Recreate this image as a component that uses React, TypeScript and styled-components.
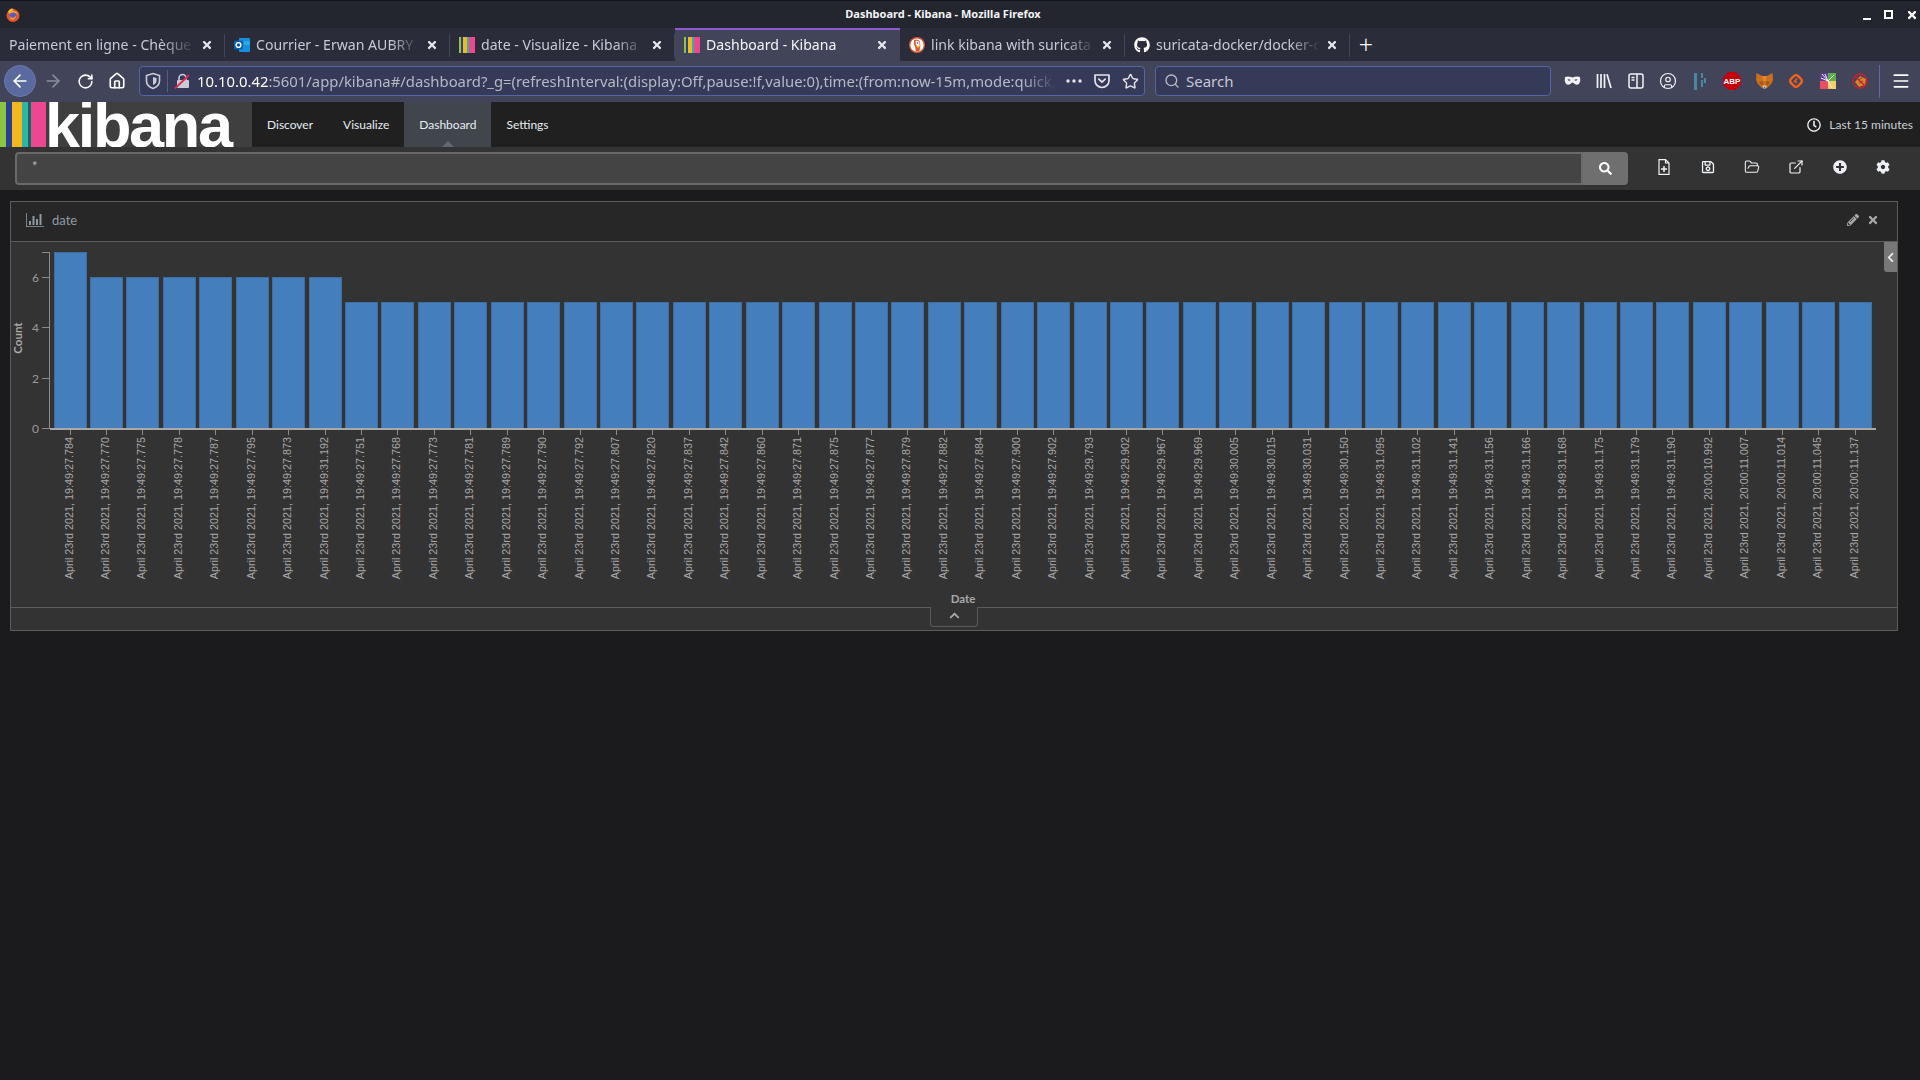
import React from 'react';
import styled, { createGlobalStyle } from 'styled-components';
import {
  ArrowLeft,
  ArrowRight,
  CircleUser,
  ExternalLink,
  FolderOpen,
  House,
  Menu,
  RotateCw,
  Search,
  Star,
} from 'lucide-react';
import {
  FaChevronLeft,
  FaChevronUp,
  FaCog,
  FaGithub,
  FaPencilAlt,
  FaPlusCircle,
  FaRegClock,
  FaRegSave,
  FaSearch,
  FaTimes,
} from 'react-icons/fa';

const GlobalStyle = createGlobalStyle`
  html, body {
    margin: 0;
    padding: 0;
    background: #1b1a1d;
    overflow: hidden;
  }
  #root {
    min-height: 100vh;
  }
`;

const stamps = [
  '19:49:27.784', '19:49:27.770', '19:49:27.775', '19:49:27.778', '19:49:27.787',
  '19:49:27.795', '19:49:27.873', '19:49:31.192', '19:49:27.751', '19:49:27.768',
  '19:49:27.773', '19:49:27.781', '19:49:27.789', '19:49:27.790', '19:49:27.792',
  '19:49:27.807', '19:49:27.820', '19:49:27.837', '19:49:27.842', '19:49:27.860',
  '19:49:27.871', '19:49:27.875', '19:49:27.877', '19:49:27.879', '19:49:27.882',
  '19:49:27.884', '19:49:27.900', '19:49:27.902', '19:49:29.793', '19:49:29.902',
  '19:49:29.967', '19:49:29.969', '19:49:30.005', '19:49:30.015', '19:49:30.031',
  '19:49:30.150', '19:49:31.095', '19:49:31.102', '19:49:31.141', '19:49:31.156',
  '19:49:31.166', '19:49:31.168', '19:49:31.175', '19:49:31.179', '19:49:31.190',
  '20:00:10.992', '20:00:11.007', '20:00:11.014', '20:00:11.045', '20:00:11.137',
];

const countFor = (i: number) => (i === 0 ? 7 : i < 8 ? 6 : 5);
const tickX = (i: number) => Math.floor(70 + 36.43 * i) + 0.5;
const Y0 = 428;
const UNIT = 25.14;

const FirefoxLogo = () => (
  <svg width="14" height="14" viewBox="0 0 14 14">
    <circle cx="7" cy="7.5" r="6.5" fill="#e8532b" />
    <path d="M2 4 Q4 -1 8 1 Q6 2 7 3 Q11 3 12 7 Q9 3 4 6z" fill="#ffb02e" />
    <circle cx="7" cy="8" r="3.6" fill="#4f5fc4" />
    <path d="M3.5 8 Q7 12 10.5 7 Q10 12 6 12 Q3.5 11 3.5 8z" fill="#f58b2b" />
  </svg>
);

const OutlookIcon = () => (
  <svg width="16" height="16" viewBox="0 0 16 16">
    <rect x="5" y="1" width="11" height="14" rx="1" fill="#1490df" />
    <rect x="10" y="4" width="6" height="4" fill="#28a8ea" />
    <rect x="0" y="3.5" width="9" height="9" rx="1" fill="#0f5fa8" />
    <circle cx="4.5" cy="8" r="2.4" fill="none" stroke="#fff" strokeWidth="1.4" />
  </svg>
);

const KibanaIcon = () => (
  <svg width="16" height="16" viewBox="0 0 16 16">
    <rect x="0" y="0" width="2" height="16" fill="#8cc63f" />
    <rect x="2" y="0" width="2" height="16" fill="#2a3f8f" />
    <rect x="4" y="0" width="4" height="16" fill="#f4b81c" />
    <rect x="8" y="0" width="2" height="16" fill="#2eb5a8" />
    <rect x="10" y="0" width="6" height="16" fill="#ec4790" />
  </svg>
);

const DuckIcon = () => (
  <svg width="16" height="16" viewBox="0 0 16 16">
    <circle cx="8" cy="8" r="8" fill="#de5833" />
    <circle cx="8" cy="8" r="6.6" fill="#fff" />
    <path d="M5 3 Q9 1.5 11 5 Q12 9 10.5 14 L7 14.5 Q6 9 5 7z" fill="#de5833" />
    <path d="M6.5 4 Q9.5 3 10.5 6 L10.5 9 L8 9.5 L7 7z" fill="#fff" />
    <circle cx="8.5" cy="6" r="0.8" fill="#2d4f8e" />
    <path d="M7.5 9 L11 8.5 L10.5 10.2 L8 10.4z" fill="#fdd20a" />
  </svg>
);

const ShieldIcon = () => (
  <svg width="16" height="18" viewBox="0 0 16 18" fill="none">
    <path d="M8 1.5 L14.5 3.5 V9 Q14.5 14 8 16.5 Q1.5 14 1.5 9 V3.5z" stroke="#c9cbd6" strokeWidth="1.6" />
    <path d="M8 5 L11.5 6 V9 Q11.5 11.5 8 13z" fill="#c9cbd6" />
  </svg>
);

const BrokenLockIcon = () => (
  <svg width="16" height="16" viewBox="0 0 16 16" fill="none">
    <path d="M5 7 V5 a3.5 3.5 0 0 1 7 0 V7" stroke="#c9cbd6" strokeWidth="1.6" />
    <rect x="3" y="7" width="12" height="8" rx="1" fill="#c9cbd6" />
    <path d="M1 15.5 L15 2" stroke="#e22850" strokeWidth="1.8" />
  </svg>
);

const DotsIcon = () => (
  <svg width="16" height="4" viewBox="0 0 16 4" fill="#e4e5ec">
    <circle cx="2" cy="2" r="1.7" />
    <circle cx="8" cy="2" r="1.7" />
    <circle cx="14" cy="2" r="1.7" />
  </svg>
);

const PocketIcon = () => (
  <svg width="16" height="16" viewBox="0 0 16 16" fill="none" stroke="#e4e5ec" strokeWidth="1.7">
    <path d="M1 2 H15 V7.5 A7 7 0 0 1 1 7.5z" strokeLinejoin="round" />
    <path d="M4.8 6.2 L8 9.2 L11.2 6.2" strokeLinecap="round" />
  </svg>
);

const MaskIcon = () => (
  <svg width="17" height="10" viewBox="0 0 17 10">
    <path
      fillRule="evenodd"
      fill="#f2f3f7"
      d="M1 1 Q4.5 0 8.5 1.5 Q12.5 0 16 1 Q17 5 15 8 Q12 10 9.5 7 Q8.5 6 7.5 7 Q5 10 2 8 Q0 5 1 1z M3.5 3.5 Q5 2.6 6.8 4 Q5 5.6 3.5 3.5z M10.2 4 Q12 2.6 13.5 3.5 Q12 5.6 10.2 4z"
    />
  </svg>
);

const LibraryIcon = () => (
  <svg width="16" height="16" viewBox="0 0 16 16" fill="none" stroke="#f2f3f7" strokeWidth="1.7">
    <path d="M1.5 1 V15 M5 1 V15 M8.5 1 V15 M11 1.2 L15 15" />
  </svg>
);

const SidebarIcon = () => (
  <svg width="16" height="16" viewBox="0 0 16 16" fill="none" stroke="#f2f3f7" strokeWidth="1.5">
    <rect x="1" y="1" width="14" height="14" rx="2" />
    <path d="M9 1 V15" />
    <path d="M3.5 4.5 H6.5 M3.5 7 H6.5" />
  </svg>
);

const BlocksIcon = () => (
  <svg width="14" height="17" viewBox="0 0 14 17" fill="#4a87a3">
    <rect x="1" y="0" width="3" height="17" />
    <rect x="8" y="0" width="2" height="5" />
    <rect x="8" y="7" width="2" height="7" />
    <rect x="11" y="5" width="2" height="5" />
  </svg>
);

const AbpBadge = () => (
  <AbpShape>
    <AbpText>ABP</AbpText>
  </AbpShape>
);

const FoxIcon = () => (
  <svg width="17" height="16" viewBox="0 0 17 16">
    <path d="M0.5 0 L6 3 H11 L16.5 0 L17 7 L15.5 10.5 L11 15 H6 L1.5 10.5 L0 7z" fill="#c9701f" />
    <path d="M6 3 H11 L10 8 H7z" fill="#e8822a" />
    <path d="M3 9 L7 8 L7 13 L4 11z M14 9 L10 8 L10 13 L13 11z" fill="#a8561a" />
    <path d="M6.5 12.5 H10.5 L10 15.5 H7z" fill="#d7c1b3" />
    <path d="M7.5 14 H9.5 L8.5 15z" fill="#233447" />
  </svg>
);

const DiamondRing = () => (
  <svg width="16" height="16" viewBox="0 0 16 16" fill="none">
    <rect x="3" y="3" width="10" height="10" rx="3" transform="rotate(45 8 8)" stroke="#f2601d" strokeWidth="2.4" />
    <path d="M9 5.5 L6.5 8.5 L9 9.5" stroke="#f2601d" strokeWidth="1.4" />
  </svg>
);

const ColorSquare = () => (
  <svg width="16" height="16" viewBox="0 0 16 16">
    <rect x="0" y="0" width="8" height="8" fill="#5b3fa0" />
    <rect x="8" y="0" width="8" height="8" fill="#5bb04a" />
    <rect x="0" y="8" width="8" height="8" fill="#ea4f63" />
    <rect x="8" y="8" width="8" height="8" fill="#f4cf6a" />
    <path d="M2 1 L8 8 L5 1 M8 8 L1 5 M8 8 L14 2 M8 8 L12 15" stroke="#fff" strokeWidth="0.9" fill="none" />
  </svg>
);

const NoScriptIcon = () => (
  <svg width="16" height="16" viewBox="0 0 16 16" fill="none">
    <path d="M3 9 L8 3 L14 6 L13 12 L7 14z" fill="#d9822b" />
    <path d="M6 7 L10 5 M7 10 L11 8" stroke="#8a4a16" strokeWidth="1" />
    <circle cx="8" cy="8" r="7" stroke="#c9202f" strokeWidth="1.3" />
    <path d="M3 3 L13 13" stroke="#c9202f" strokeWidth="1.3" />
  </svg>
);

const NewFileIcon = () => (
  <svg width="12" height="16" viewBox="0 0 12 16" fill="none" stroke="#eef2f6" strokeWidth="1.2">
    <path d="M7.5 0.6 H1 V15.4 H11 V4z M7.5 0.6 V4 H11" />
    <path d="M6 7 V13 M3 10 H9" strokeWidth="1.5" />
  </svg>
);

const BarsIcon = () => (
  <svg width="18" height="14" viewBox="0 0 18 14" fill="#8d9aa3">
    <rect x="0" y="0" width="0.8" height="14" />
    <rect x="0" y="13" width="18" height="0.8" />
    <rect x="3" y="8" width="2" height="4" />
    <rect x="6.5" y="3" width="2" height="9" />
    <rect x="10" y="6" width="2" height="6" />
    <rect x="13.5" y="1" width="2" height="11" />
  </svg>
);

const BarChart = () => (
  <Chart viewBox="11 242 1886 365" width="1886" height="365">
    {stamps.map((_, i) => {
      const h = countFor(i) * UNIT;
      return (
        <rect
          key={i}
          x={Math.floor(tickX(i) - 16) + 0.5}
          y={Math.round(Y0 - h) + 0.5}
          width={32}
          height={Math.round(h)}
          fill="#447ebd"
          stroke="#3e6d9f"
          strokeWidth="1"
        />
      );
    })}

    <line x1="49.5" y1="252" x2="49.5" y2="429" stroke="#8c8c8c" />
    <line x1="42" y1="252.5" x2="49" y2="252.5" stroke="#8c8c8c" />
    {[0, 2, 4, 6].map((n) => {
      const y = Math.round(Y0 - n * UNIT) + 0.5;
      return (
        <g key={n}>
          <line x1="42" y1={y} x2="49" y2={y} stroke="#8c8c8c" />
          <TickValue x="39" y={y + 4.5}>{n}</TickValue>
        </g>
      );
    })}
    <AxisTitle transform="translate(22 338) rotate(-90)">Count</AxisTitle>

    <rect x="50" y="428" width="1826" height="2" fill="#a8a8a8" />
    {stamps.map((stamp, i) => (
      <g key={stamp + i}>
        <line x1={tickX(i)} y1="430" x2={tickX(i)} y2="435" stroke="#8c8c8c" />
        <TickLabel transform={`translate(${tickX(i) + 2.5} 437) rotate(-90)`}>
          {`April 23rd 2021, ${stamp}`}
        </TickLabel>
      </g>
    ))}
    <AxisTitle x="963" y="603">Date</AxisTitle>
  </Chart>
);

const tabs = [
  { title: 'Paiement en ligne - Chèque emploi service', icon: null },
  { title: 'Courrier - Erwan AUBRY - Outlook', icon: <OutlookIcon /> },
  { title: 'date - Visualize - Kibana', icon: <KibanaIcon /> },
  { title: 'Dashboard - Kibana', icon: <KibanaIcon />, active: true },
  { title: 'link kibana with suricata at DuckDuckGo', icon: <DuckIcon /> },
  { title: 'suricata-docker/docker-compose.yml', icon: <FaGithub size={16} color="#fff" /> },
];

const extensions = [
  <MaskIcon />,
  <LibraryIcon />,
  <SidebarIcon />,
  <CircleUser size={18} color="#f2f3f7" strokeWidth={1.6} />,
  <BlocksIcon />,
  <AbpBadge />,
  <FoxIcon />,
  <DiamondRing />,
  <ColorSquare />,
  <NoScriptIcon />,
];

const actions = [
  <NewFileIcon />,
  <FaRegSave size={14} />,
  <FolderOpen size={16} strokeWidth={1.6} />,
  <ExternalLink size={16} strokeWidth={1.8} />,
  <FaPlusCircle size={14} />,
  <FaCog size={14} />,
];

export default function App() {
  return (
    <>
      <GlobalStyle />
      <TitleBar>
        <TitleLogo>
          <FirefoxLogo />
        </TitleLogo>
        <WindowTitle>Dashboard - Kibana - Mozilla Firefox</WindowTitle>
        <WindowButtons>
          <MinimizeGlyph />
          <MaximizeGlyph />
          <FaTimes size={12} color="#fff" />
        </WindowButtons>
      </TitleBar>

      <TabStrip>
        {tabs.map((tab) => (
          <Tab key={tab.title} $active={tab.active}>
            {tab.icon}
            <TabTitle $active={tab.active}>{tab.title}</TabTitle>
            <TabClose>
              <FaTimes size={12} />
            </TabClose>
          </Tab>
        ))}
        <NewTab>+</NewTab>
      </TabStrip>

      <Toolbar>
        <BackButton>
          <ArrowLeft size={20} color="#fff" strokeWidth={2} />
        </BackButton>
        <NavButton $first>
          <ArrowRight size={20} color="#8b8d9c" strokeWidth={2} />
        </NavButton>
        <NavButton>
          <RotateCw size={17} color="#fff" strokeWidth={2.2} />
        </NavButton>
        <NavButton>
          <House size={18} color="#fff" strokeWidth={2.2} />
        </NavButton>

        <UrlBar>
          <ShieldSlot>
            <ShieldIcon />
          </ShieldSlot>
          <LockSlot>
            <BrokenLockIcon />
          </LockSlot>
          <UrlText>
            <UrlHost>10.10.0.42</UrlHost>
            :5601/app/kibana#/dashboard?_g=(refreshInterval:(display:Off,pause:!f,value:0),time:(from:now-15m,mode:quick,to:now))
          </UrlText>
          <UrlActions>
            <DotsIcon />
            <PocketIcon />
            <Star size={17} color="#e4e5ec" strokeWidth={2} />
          </UrlActions>
        </UrlBar>

        <SearchBox>
          <Search size={16} color="#b9bbc8" strokeWidth={2} />
          Search
        </SearchBox>

        <Extensions>
          {extensions.map((icon, i) => (
            <ExtensionSlot key={i}>{icon}</ExtensionSlot>
          ))}
        </Extensions>
        <ToolbarDivider />
        <NavButton>
          <Menu size={20} color="#fff" strokeWidth={2} />
        </NavButton>
      </Toolbar>

      <KibanaNav>
        <Logo>
          <Stripe $color="#8cc63f" $width={6} />
          <Stripe $color="#2a3f8f" $width={6} />
          <Stripe $color="#f4b81c" $width={10} />
          <Stripe $color="#2eb5a8" $width={6} />
          <Stripe $color="#0f6b62" $width={3} />
          <Stripe $color="#ec4790" $width={15} />
          <LogoWord>kibana</LogoWord>
        </Logo>
        <NavLink>Discover</NavLink>
        <NavLink>Visualize</NavLink>
        <NavLink $active>Dashboard</NavLink>
        <NavLink>Settings</NavLink>
        <TimePicker>
          <FaRegClock size={14} color="#eef2f6" />
          Last 15 minutes
        </TimePicker>
      </KibanaNav>

      <QueryRow>
        <QueryForm>
          <QueryInput>*</QueryInput>
          <QueryButton>
            <FaSearch size={13} color="#fff" />
          </QueryButton>
        </QueryForm>
        <QueryActions>
          {actions.map((icon, i) => (
            <ActionSlot key={i}>{icon}</ActionSlot>
          ))}
        </QueryActions>
      </QueryRow>

      <Main>
        <Panel>
          <PanelHeader>
            <BarsIcon />
            <PanelTitle>date</PanelTitle>
            <PanelControls>
              <FaPencilAlt size={12} />
              <FaTimes size={12} />
            </PanelControls>
          </PanelHeader>
          <ChartArea>
            <BarChart />
            <LegendToggle>
              <FaChevronLeft size={11} color="#eee" />
            </LegendToggle>
          </ChartArea>
          <SpyRow>
            <SpyToggle>
              <FaChevronUp size={11} color="#aaa" />
            </SpyToggle>
          </SpyRow>
        </Panel>
      </Main>
    </>
  );
}

const TitleBar = styled.div`
  display: flex;
  align-items: center;
  height: 27px;
  background: #23252f;
  border-top: 1px solid #12131a;
`;

const TitleLogo = styled.div`
  display: flex;
  width: 26px;
  padding-left: 6px;
  box-sizing: border-box;
`;

const WindowTitle = styled.div`
  flex: 1;
  padding-bottom: 2px;
  text-align: center;
  color: #f4f4f6;
  font: 700 11px 'Noto Sans', sans-serif;
`;

const WindowButtons = styled.div`
  display: flex;
  align-items: center;
  justify-content: flex-end;
  gap: 13px;
  width: 60px;
  padding-right: 2px;
  box-sizing: border-box;
`;

const MinimizeGlyph = styled.span`
  width: 8px;
  height: 2px;
  margin-top: 8px;
  background: #fff;
`;

const MaximizeGlyph = styled.span`
  width: 5px;
  height: 5px;
  border: 2px solid #fff;
`;

const TabStrip = styled.div`
  display: flex;
  height: 33px;
  background: #2a2c39;
`;

const Tab = styled.div<{ $active?: boolean }>`
  position: relative;
  display: flex;
  align-items: center;
  gap: 6px;
  width: 225px;
  padding: 0 10px 2px 9px;
  box-sizing: border-box;
  background: ${({ $active }) => ($active ? '#42455a' : 'transparent')};
  border-top: 2px solid ${({ $active }) => ($active ? '#9059d1' : 'transparent')};

  &::after {
    content: '';
    position: absolute;
    right: 0;
    top: 4px;
    bottom: 4px;
    width: 1px;
    background: ${({ $active }) => ($active ? 'transparent' : '#43465a')};
  }
`;

const TabTitle = styled.span<{ $active?: boolean }>`
  flex: 1;
  overflow: hidden;
  white-space: nowrap;
  color: ${({ $active }) => ($active ? '#f4f5f9' : '#c6cad8')};
  font: 14.1px 'Noto Sans', sans-serif;
  mask-image: linear-gradient(to right, #000 82%, transparent 100%);
`;

const TabClose = styled.span`
  display: flex;
  color: #e4e5ec;
  margin-right: 2px;
`;

const NewTab = styled.div`
  display: flex;
  align-items: center;
  justify-content: center;
  width: 32px;
  padding-bottom: 2px;
  color: #fff;
  font: 300 25px 'Noto Sans', sans-serif;
`;

const Toolbar = styled.div`
  display: flex;
  align-items: center;
  height: 41px;
  padding: 0 0 1px 4px;
  box-sizing: border-box;
  background: #42455a;
`;

const BackButton = styled.div`
  display: flex;
  align-items: center;
  justify-content: center;
  width: 32px;
  height: 32px;
  border-radius: 50%;
  background: #5a6a9e;
  border: 1px solid #6a7aae;
  box-sizing: border-box;
`;

const NavButton = styled.div<{ $first?: boolean }>`
  display: flex;
  align-items: center;
  justify-content: center;
  flex: none;
  width: 32px;
  margin-left: ${({ $first }) => ($first ? '1px' : '0')};
`;

const UrlBar = styled.div`
  display: flex;
  align-items: center;
  width: 1006px;
  height: 30px;
  margin-left: 6px;
  box-sizing: border-box;
  background: #363a59;
  border: 1px solid #5567a3;
  border-radius: 4px;
`;

const ShieldSlot = styled.div`
  display: flex;
  align-items: center;
  justify-content: center;
  width: 28px;
  height: 22px;
  padding-right: 2px;
  box-sizing: border-box;
  border-right: 1px solid #5c5f78;
`;

const LockSlot = styled.div`
  display: flex;
  width: 29px;
  padding-left: 6px;
  box-sizing: border-box;
`;

const UrlText = styled.div`
  flex: 1;
  overflow: hidden;
  white-space: nowrap;
  color: #b6b9c6;
  font: 14.85px 'Noto Sans', sans-serif;
  mask-image: linear-gradient(to right, #000 96%, transparent 100%);
`;

const UrlHost = styled.span`
  color: #fff;
`;

const UrlActions = styled.div`
  display: flex;
  align-items: center;
  gap: 12px;
  margin-left: 9px;
  padding-right: 5px;
`;

const SearchBox = styled.div`
  display: flex;
  align-items: center;
  gap: 6px;
  width: 396px;
  height: 30px;
  margin-left: 10px;
  padding-left: 8px;
  box-sizing: border-box;
  background: #363a59;
  border: 1px solid #5567a3;
  border-radius: 4px;
  color: #c6c8d4;
  font: 15px 'Noto Sans', sans-serif;
`;

const Extensions = styled.div`
  display: flex;
  margin-left: 5px;
`;

const ExtensionSlot = styled.div`
  display: flex;
  align-items: center;
  justify-content: center;
  width: 32px;
`;

const ToolbarDivider = styled.div`
  width: 1px;
  height: 33px;
  margin-left: 3px;
  margin-right: 5px;
  background: #5a6a9e;
`;

const AbpShape = styled.div`
  display: flex;
  align-items: center;
  justify-content: center;
  width: 18px;
  height: 18px;
  background: #c4000c;
  clip-path: polygon(30% 0, 70% 0, 100% 30%, 100% 70%, 70% 100%, 30% 100%, 0 70%, 0 30%);
`;

const AbpText = styled.span`
  color: #fff;
  font: 700 8px 'Liberation Sans', sans-serif;
`;

const KibanaNav = styled.div`
  display: flex;
  height: 45px;
  background: #202020;
`;

const Logo = styled.div`
  display: flex;
  flex: none;
  width: 252px;
  overflow: hidden;
  background: #3f3f3f;
`;

const Stripe = styled.span<{ $color: string; $width: number }>`
  flex: none;
  width: ${({ $width }) => $width}px;
  background: ${({ $color }) => $color};
`;

const LogoWord = styled.span`
  margin-left: -1px;
  padding-top: 1px;
  color: #fff;
  font: 700 63px/45px 'Liberation Sans', sans-serif;
  letter-spacing: -2.3px;
`;

const NavLink = styled.div<{ $active?: boolean }>`
  position: relative;
  display: flex;
  align-items: center;
  padding: 0 15px;
  background: ${({ $active }) => ($active ? '#41464d' : 'transparent')};
  color: #e6edf2;
  font: 12px Lato, sans-serif;

  &::after {
    content: '';
    display: ${({ $active }) => ($active ? 'block' : 'none')};
    position: absolute;
    left: 50%;
    bottom: 0;
    margin-left: -6px;
    border: 6px solid transparent;
    border-top: 0;
    border-bottom-color: #5f6972;
  }
`;

const TimePicker = styled.div`
  display: flex;
  align-items: center;
  gap: 8px;
  margin-left: auto;
  padding-right: 7px;
  color: #c8d0d6;
  font: 12px Lato, sans-serif;
`;

const QueryRow = styled.div`
  display: flex;
  align-items: center;
  height: 43px;
  padding-left: 15px;
  background: #333;
`;

const QueryForm = styled.div`
  display: flex;
  width: 1613px;
  height: 33px;
`;

const QueryInput = styled.div`
  flex: 1;
  padding: 4px 15px;
  box-sizing: border-box;
  background: #444;
  border: 2px solid #6a6a6a;
  border-radius: 4px 0 0 4px;
  color: #b8b8b8;
  font: 13px Lato, sans-serif;
`;

const QueryButton = styled.div`
  display: flex;
  align-items: center;
  justify-content: center;
  width: 45px;
  background: #6f6f6f;
  border-radius: 0 4px 4px 0;
`;

const QueryActions = styled.div`
  display: flex;
  margin-left: 14.5px;
  margin-top: -4px;
  color: #eef2f6;
`;

const ActionSlot = styled.div`
  display: flex;
  align-items: center;
  justify-content: center;
  width: 43.8px;
`;

const Main = styled.main`
  padding: 11px 22px 0 10px;
`;

const Panel = styled.section`
  border: 1px solid #5c5c5c;
  background: #333;
`;

const PanelHeader = styled.header`
  display: flex;
  align-items: center;
  gap: 8px;
  height: 36px;
  padding: 0 15px 3px;
  background: #272727;
  border-bottom: 1px solid #5c5c5c;
`;

const PanelTitle = styled.span`
  color: #8d9aa3;
  font: 13px Lato, sans-serif;
`;

const PanelControls = styled.div`
  display: flex;
  align-items: center;
  gap: 8px;
  margin-left: auto;
  margin-right: 3px;
  color: #a9a9a9;
`;

const ChartArea = styled.div`
  position: relative;
  height: 365px;
`;

const Chart = styled.svg`
  display: block;
`;

const TickValue = styled.text`
  fill: #9a9a9a;
  font: 12px Lato, sans-serif;
  text-anchor: end;
`;

const TickLabel = styled.text`
  fill: #a8a8a8;
  font: 10.8px 'Liberation Sans', sans-serif;
  text-anchor: end;
`;

const AxisTitle = styled.text`
  fill: #a8a8a8;
  font: 700 11.5px Lato, sans-serif;
  text-anchor: middle;
`;

const LegendToggle = styled.div`
  position: absolute;
  top: 0;
  right: 0;
  display: flex;
  align-items: center;
  justify-content: center;
  width: 13px;
  height: 30px;
  background: #777;
  border-radius: 0 0 0 3px;
`;

const SpyRow = styled.div`
  display: flex;
  justify-content: center;
  height: 22px;
  border-top: 1px solid #5c5c5c;
`;

const SpyToggle = styled.div`
  display: flex;
  align-items: center;
  justify-content: center;
  width: 48px;
  height: 20px;
  padding-bottom: 2px;
  margin-top: -1px;
  box-sizing: border-box;
  background: #333;
  border: 1px solid #5c5c5c;
  border-top: 0;
  border-radius: 0 0 4px 4px;
`;
